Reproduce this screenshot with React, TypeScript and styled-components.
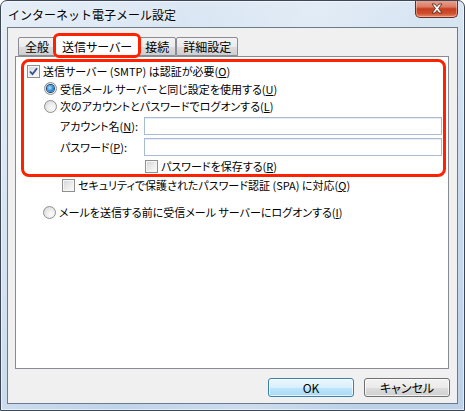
import React from "react";
import styled, { createGlobalStyle } from "styled-components";

const Global = createGlobalStyle`
  html, body { margin: 0; padding: 0; background: #ffffff; }
  body {
    font-family: "Noto Sans CJK JP", "Noto Sans", sans-serif;
    font-size: 12px;
    color: #000;
  }
  * { box-sizing: border-box; }
`;

const Window = styled.div`
  width: 465px;
  height: 411px;
  border: 1px solid #3d4654;
  border-radius: 7px 7px 0 0;
  background:
    linear-gradient(100deg, rgba(255,255,255,0.35) 0%, rgba(255,255,255,0.05) 35%, rgba(255,255,255,0.25) 60%, rgba(255,255,255,0) 80%),
    linear-gradient(180deg, #d9e6f3 0%, #c8daed 50%, #bcd1e8 100%);
  box-shadow: inset 0 0 0 1px rgba(255,255,255,0.55);
  display: flex;
  flex-direction: column;
  overflow: hidden;
`;

const TitleBar = styled.div`
  height: 26px;
  flex: none;
  display: flex;
  align-items: center;
  justify-content: space-between;
  padding-left: 7px;
`;

const TitleText = styled.span`
  font-size: 12px;
  color: #000;
  text-shadow: 0 0 6px rgba(255,255,255,0.9);
`;

const CloseButton = styled.div`
  align-self: flex-start;
  margin-top: -1px;
  margin-right: 6px;
  width: 43px;
  height: 18px;
  border: 1px solid #6e2a1d;
  border-top: none;
  border-radius: 0 0 5px 5px;
  background: linear-gradient(180deg, #eaa795 0%, #dc7b63 40%, #c83d1f 52%, #cf4d2c 78%, #e38a6c 100%);
  box-shadow: inset 0 0 0 1px rgba(255,255,255,0.35);
  display: flex;
  align-items: center;
  justify-content: center;
`;

const Frame = styled.div`
  flex: 1;
  display: flex;
  padding: 0 6px 6px 6px;
`;

const Client = styled.div`
  flex: 1;
  border: 1px solid #6c7a8a;
  background: #f0f0f0;
  display: flex;
  flex-direction: column;
  padding: 7px 8px 6px 7px;
`;

const TabRow = styled.div`
  display: flex;
  align-items: flex-end;
  height: 21px;
  padding-left: 3px;
  position: relative;
  z-index: 1;
`;

const Tab = styled.div<{ $active?: boolean }>`
  position: relative;
  height: ${(p) => (p.$active ? "22px" : "19px")};
  margin: ${(p) => (p.$active ? "0 -2px -1px -2px" : "0")};
  padding: ${(p) => (p.$active ? "0 7px" : "0 6px")};
  border: 1px solid #898c95;
  border-bottom: ${(p) => (p.$active ? "none" : "1px solid #898c95")};
  border-radius: 2px 2px 0 0;
  background: ${(p) =>
    p.$active ? "#ffffff" : "linear-gradient(180deg, #f3f3f3 0%, #ebebeb 50%, #dddddd 51%, #cfcfcf 100%)"};
  z-index: ${(p) => (p.$active ? 2 : 1)};
  display: flex;
  align-items: center;
  font-size: 12px;
  font-feature-settings: "palt";
  white-space: nowrap;
`;

const TabHighlight = styled.div`
  position: absolute;
  top: -3px;
  left: -2px;
  right: -2px;
  bottom: -1px;
  border: 3px solid #ff2200;
  border-radius: 6px;
  pointer-events: none;
`;

const Panel = styled.div`
  flex: 1;
  background: #ffffff;
  border: 1px solid #898c95;
  display: flex;
  flex-direction: column;
  font-size: 11px;
  font-feature-settings: "palt";
`;

const RedBox = styled.div`
  margin: 2px 2px 0 5px;
  border: 3px solid #ff2200;
  border-radius: 8px;
  display: flex;
  flex-direction: column;
`;

const Line = styled.div<{ $indent: number; $h: number; $mt?: number }>`
  display: flex;
  align-items: center;
  gap: 2px;
  height: ${(p) => p.$h}px;
  margin-top: ${(p) => p.$mt ?? 0}px;
  padding-left: ${(p) => p.$indent}px;
  white-space: nowrap;
`;

const FieldRow = styled.div<{ $mt: number }>`
  display: flex;
  align-items: center;
  margin-top: ${(p) => p.$mt}px;
  padding-left: 36px;
  padding-right: 1px;
`;

const FieldLabel = styled.span`
  width: 84px;
  flex: none;
  white-space: nowrap;
`;

const TextBox = styled.div`
  flex: 1;
  height: 18px;
  border: 1px solid #a7bbd2;
  background: #ffffff;
  box-shadow: inset 0 1px 0 #e9eef5;
`;

const CheckBox = styled.span`
  flex: none;
  width: 13px;
  height: 13px;
  border: 1px solid #8e8f8f;
  background: linear-gradient(135deg, #d3d4d6 0%, #eeeeee 60%, #fbfbfb 100%);
  box-shadow: inset 0 0 0 1px #f6f6f6;
  display: flex;
  align-items: center;
  justify-content: center;
  margin-right: 1px;
`;

const Radio = styled.span`
  flex: none;
  width: 13px;
  height: 13px;
  border-radius: 50%;
  border: 1px solid #8e8f8f;
  background: radial-gradient(circle at 65% 65%, #fdfdfd 0%, #e8e8e8 55%, #cfcfcf 100%);
  display: flex;
  align-items: center;
  justify-content: center;
  margin-right: 1px;
`;

const RadioDot = styled.span`
  width: 7px;
  height: 7px;
  border-radius: 50%;
  background: radial-gradient(circle at 40% 40%, #b5e3ff 0%, #3a9ae6 45%, #0f4c8c 100%);
  box-shadow: 0 0 0 1px #1e3f6b;
`;

const Mn = styled.u`
  text-decoration: underline;
  text-underline-offset: 1px;
`;

const ButtonRow = styled.div`
  display: flex;
  justify-content: flex-end;
  gap: 10px;
  margin-top: 9px;
  margin-right: -1px;
`;

const Button = styled.div<{ $default?: boolean }>`
  width: 86px;
  height: 19px;
  border: 1px solid ${(p) => (p.$default ? "#3c7fb1" : "#707070")};
  border-radius: 3px;
  background: ${(p) =>
    p.$default
      ? "linear-gradient(180deg, #eaf6fd 0%, #d9f0fc 50%, #bee6fd 51%, #a7d9f5 100%)"
      : "linear-gradient(180deg, #f2f2f2 0%, #ebebeb 50%, #dddddd 51%, #cfcfcf 100%)"};
  box-shadow: inset 0 0 0 1px rgba(255,255,255,0.7);
  display: flex;
  align-items: center;
  justify-content: center;
  font-size: 12px;
  font-feature-settings: "palt";
`;

const Check = () => (
  <svg width="9" height="9" viewBox="0 0 9 9">
    <path d="M1 4.5 L3.5 7.2 L8 1.2" fill="none" stroke="#2f4f96" strokeWidth="1.8" />
  </svg>
);

const CloseGlyph = () => (
  <svg width="14" height="11" viewBox="0 0 14 11">
    <path
      d="M2 1 H5 L7 3.6 L9 1 H12 L8.6 5.5 L12 10 H9 L7 7.4 L5 10 H2 L5.4 5.5 Z"
      fill="#ffffff"
      stroke="#5a2a22"
      strokeWidth="0.9"
    />
  </svg>
);

export default function App() {
  return (
    <>
      <Global />
      <Window>
        <TitleBar>
          <TitleText>インターネット電子メール設定</TitleText>
          <CloseButton>
            <CloseGlyph />
          </CloseButton>
        </TitleBar>
        <Frame>
          <Client>
            <TabRow>
              <Tab>全般</Tab>
              <Tab $active>
                送信サーバー
                <TabHighlight />
              </Tab>
              <Tab>接続</Tab>
              <Tab>詳細設定</Tab>
            </TabRow>
            <Panel>
              <RedBox>
                <Line $indent={3} $h={18}>
                  <CheckBox>
                    <Check />
                  </CheckBox>
                  <span>
                    送信サーバー (SMTP) は認証が必要(<Mn>O</Mn>)
                  </span>
                </Line>
                <Line $indent={20} $h={17}>
                  <Radio>
                    <RadioDot />
                  </Radio>
                  <span>
                    受信メール サーバーと同じ設定を使用する(<Mn>U</Mn>)
                  </span>
                </Line>
                <Line $indent={20} $h={18}>
                  <Radio />
                  <span>
                    次のアカウントとパスワードでログオンする(<Mn>L</Mn>)
                  </span>
                </Line>
                <FieldRow $mt={2}>
                  <FieldLabel>
                    アカウント名(<Mn>N</Mn>):
                  </FieldLabel>
                  <TextBox />
                </FieldRow>
                <FieldRow $mt={3}>
                  <FieldLabel>
                    パスワード(<Mn>P</Mn>):
                  </FieldLabel>
                  <TextBox />
                </FieldRow>
                <Line $indent={121} $h={16} $mt={2}>
                  <CheckBox />
                  <span>
                    パスワードを保存する(<Mn>R</Mn>)
                  </span>
                </Line>
              </RedBox>
              <Line $indent={46} $h={16}>
                <CheckBox />
                <span>
                  セキュリティで保護されたパスワード認証 (SPA) に対応(<Mn>Q</Mn>)
                </span>
              </Line>
              <Line $indent={27} $h={18} $mt={10}>
                <Radio />
                <span>
                  メールを送信する前に受信メール サーバーにログオンする(<Mn>I</Mn>)
                </span>
              </Line>
            </Panel>
            <ButtonRow>
              <Button $default>OK</Button>
              <Button>キャンセル</Button>
            </ButtonRow>
          </Client>
        </Frame>
      </Window>
    </>
  );
}
